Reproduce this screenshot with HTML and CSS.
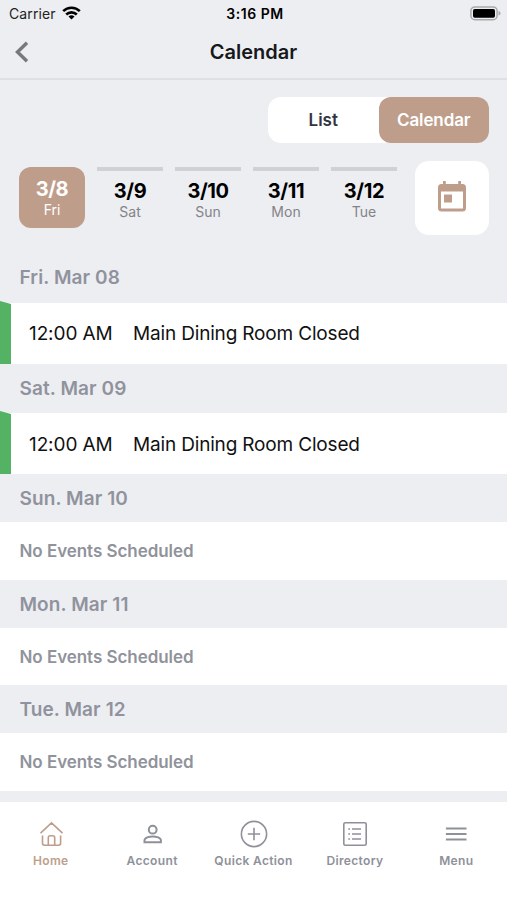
FILE: index.html
```html
<!DOCTYPE html>
<html lang="en">
<head>
<meta charset="utf-8">
<title>Calendar</title>
<link rel="stylesheet" href="styles.css">
</head>
<body>
<div class="status">
  <div class="carrier"><span>Carrier</span>
    <svg width="19" height="14" viewBox="0 0 19 14" fill="none" stroke="#000" stroke-width="2.6"><path d="M1.2 5.1a11.800 11.800 0 0 1 16.600 0"/><path d="M4.200 8.500a7.600 7.600 0 0 1 10.600 0"/><path d="M9.500 13.500L6.500 10.600a4.400 4.400 0 0 1 6 0z" fill="#000" stroke="none"/></svg>
  </div>
  <span class="clock">3:16 PM</span>
  <svg class="battery" width="31" height="15" viewBox="0 0 31 15"><rect x=".9" y=".9" width="26.200" height="12.800" rx="4" fill="none" stroke="#a9aaac" stroke-width="1.500"/><rect x="3" y="3" width="22" height="8.800" rx="1.800"/><path d="M28.500 5q2 .6 2 2.300t-2 2.300z" fill="#a9aaac"/></svg>
</div>
<header class="titlebar">
  <svg class="back" width="16" height="22" viewBox="0 0 16 22" fill="none" stroke="#77787a" stroke-width="3.400"><path d="M13 1.800L3.500 11l9.500 9.200"/></svg>
  <h1>Calendar</h1>
</header>
<main>
  <div class="segment"><span class="seg">List</span><span class="seg on">Calendar</span></div>
  <div class="picker">
    <div class="day on"><b>3/8</b><span>Fri</span></div>
    <div class="day"><b>3/9</b><span>Sat</span></div>
    <div class="day"><b>3/10</b><span>Sun</span></div>
    <div class="day"><b>3/11</b><span>Mon</span></div>
    <div class="day"><b>3/12</b><span>Tue</span></div>
    <div class="calbtn"><svg width="28" height="32" viewBox="0 0 28 32" fill="#be9e8b"><path fill-rule="evenodd" d="M5 1h2.800v3h12.400V1H23v3h1.500Q28 4 28 7.500V28q0 3.500-3.500 3.500h-21Q0 31.500 0 28V7.500Q0 4 3.500 4H5zM3 11.500v17h22v-17z"/><path d="M6 14.500h8v8H6z"/></svg></div>
  </div>
  <h2 class="first">Fri. Mar 08</h2>
  <div class="event"><time>12:00 AM</time><span>Main Dining Room Closed</span></div>
  <h2 class="tall">Sat. Mar 09</h2>
  <div class="event"><time>12:00 AM</time><span>Main Dining Room Closed</span></div>
  <h2>Sun. Mar 10</h2>
  <div class="empty">No Events Scheduled</div>
  <h2>Mon. Mar 11</h2>
  <div class="empty short">No Events Scheduled</div>
  <h2>Tue. Mar 12</h2>
  <div class="empty">No Events Scheduled</div>
</main>
<nav>
  <div class="tab on"><svg viewBox="0 0 28 28"><path d="M3.500 13.200L14.500 2.900l11 10.300M5.500 15.500v7.800q0 1.900 1.900 1.900h3.900v-7.500q0-2 2-2h2.400q2 0 2 2v7.500h4q1.900 0 1.900-1.900v-7.800M11.300 25.200h6.400"/></svg><span>Home</span></div>
  <div class="tab"><svg class="bold" viewBox="0 0 28 28"><circle cx="14.700" cy="9.700" r="3.900"/><path d="M6.500 22.200v-1.900c0-2.500 4.600-3.900 8.200-3.900s8.200 1.400 8.200 3.900v1.900z"/></svg><span>Account</span></div>
  <div class="tab"><svg viewBox="0 0 28 28"><circle cx="14" cy="14" r="12.600"/><path d="M14 7.800v12.400M7.800 14h12.400"/></svg><span>Quick Action</span></div>
  <div class="tab"><svg viewBox="0 0 28 28"><rect x="2.800" y="2.800" width="22.400" height="22.400" rx="1.500"/><path d="M11 9h9M11 14h9M11 19h9M7.300 9H9M7.300 14H9M7.300 19H9"/></svg><span>Directory</span></div>
  <div class="tab"><svg class="bold" viewBox="0 0 28 28"><path d="M3.900 8.500h20.600M3.900 14h20.600M3.900 19.500h20.600"/></svg><span>Menu</span></div>
</nav>
</body>
</html>
```

FILE: styles.css
```css
* { box-sizing: border-box; }
body { margin: 0; width: 507px; height: 900px; overflow: hidden; background: #edeef2; font-family: Inter, "Liberation Sans", sans-serif; color: #000; display: flex; flex-direction: column; }
svg { display: block; flex: none; }
.status { height: 28px; display: grid; grid-template-columns: 1fr auto 1fr; align-items: center; padding: 0 6px 2px 9px; font-size: 14px; }
.carrier { display: flex; align-items: center; gap: 6px; color: #222; letter-spacing: .1px; }
.clock { font-weight: 600; font-size: 14px; letter-spacing: .55px; }
.battery { justify-self: end; }
.titlebar { height: 52px; border-bottom: 2px solid #dfe0e4; display: grid; grid-template-columns: 1fr auto 1fr; align-items: center; padding: 0 14px 2px; }
h1 { grid-column: 2; margin: 0; font-size: 20px; font-weight: 600; color: #17181b; }
main { flex: 1; }
.segment { width: 221px; height: 46px; margin: 17px 18px 0 auto; border-radius: 13px; background: #fff; display: flex; }
.seg { flex: 1; display: flex; align-items: center; justify-content: center; font-size: 17px; font-weight: 600; color: #34343f; }
.seg.on { background: #be9e8b; color: #fff; border-radius: 12px; letter-spacing: -.1px; }
.picker { display: flex; gap: 12px; padding: 0 18px 0 19px; margin-top: 18px; height: 74px; }
.day { width: 66px; height: 61px; margin-top: 6px; border-top: 4px solid #d0d1d5; padding-top: 8px; display: flex; flex-direction: column; align-items: center; }
.day b { font-size: 20px; line-height: 24px; font-weight: 700; letter-spacing: -.4px; }
.day span { font-size: 14px; line-height: 18px; color: #838388; }
.day.on { border: 0; border-radius: 12px; background: #be9e8b; padding-top: 10px; color: #fff; }
.day.on span { color: #fff; }
.calbtn { width: 74px; height: 74px; margin-left: auto; background: #fff; border-radius: 14px; display: flex; align-items: center; justify-content: center; padding-bottom: 4px; }
h2 { margin: 0; height: 48px; padding-left: 19.5px; font-size: 19px; line-height: 49px; font-weight: 600; letter-spacing: .1px; color: #90939d; }
h2.first { height: 68px; padding-top: 18px; }
h2.tall { height: 49px; }
.event { height: 61px; background: #fff; position: relative; display: flex; align-items: center; padding-left: 29px; font-size: 19px; letter-spacing: -.17px; color: #111; }
.event time { width: 104px; letter-spacing: -.1px; }
.event::before { content: ""; position: absolute; left: 0; top: -2px; width: 11px; height: 63px; background: #54b265; clip-path: polygon(0 0, 100% 3px, 100% 100%, 0 100%); }
.tall + .event { padding-top: 1px; }
.empty { height: 58px; background: #fff; padding-left: 19.5px; line-height: 58px; font-size: 17px; font-weight: 600; letter-spacing: -.05px; color: #90939b; }
.empty.short { height: 57px; }
nav { height: 98px; background: #fff; display: flex; padding-top: 18px; }
.tab { flex: 1; display: flex; flex-direction: column; align-items: center; gap: 4px; color: #8e919a; font-size: 12px; line-height: 17px; font-weight: 600; letter-spacing: .35px; white-space: nowrap; }
.tab svg { width: 28px; height: 28px; fill: none; stroke: currentColor; stroke-width: 1.6; }
.tab svg.bold { stroke-width: 2; }
.tab.on { color: #be9e8b; }
```
